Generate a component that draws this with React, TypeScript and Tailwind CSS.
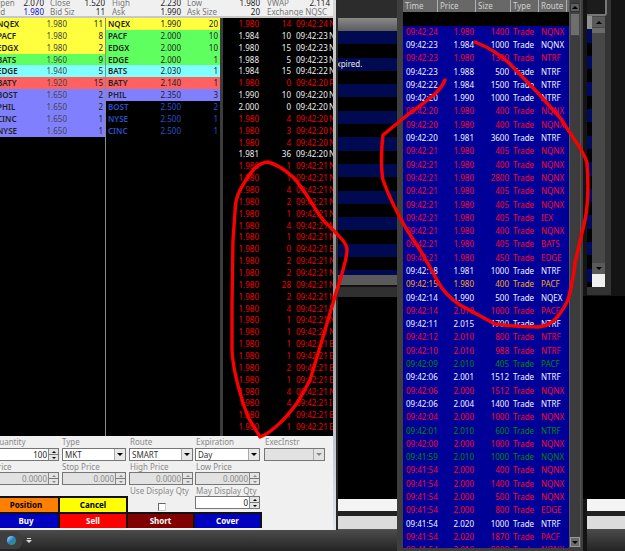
import React from "react";

const bidRows: { n: string; p: string; s: string; c: string }[] = [
  { n: "NQEX", p: "1.980", s: "11", c: "bg-[#ffff40]" },
  { n: "PACF", p: "1.980", s: "8", c: "bg-[#ffff40]" },
  { n: "EDGX", p: "1.980", s: "2", c: "bg-[#ffff40]" },
  { n: "BATS", p: "1.960", s: "9", c: "bg-[#60ff60]" },
  { n: "EDGE", p: "1.940", s: "5", c: "bg-[#80ffff]" },
  { n: "BATY", p: "1.920", s: "15", c: "bg-[#ff6060]" },
  { n: "BOST", p: "1.650", s: "2", c: "bg-[#8080ff]" },
  { n: "PHIL", p: "1.650", s: "2", c: "bg-[#8080ff]" },
  { n: "CINC", p: "1.650", s: "1", c: "bg-[#8080ff]" },
  { n: "NYSE", p: "1.650", s: "1", c: "bg-[#8080ff]" },
];
const askRows: { n: string; p: string; s: string; c: string }[] = [
  { n: "NQEX", p: "1.990", s: "20", c: "bg-[#ffff40] text-[#222]" },
  { n: "PACF", p: "2.000", s: "10", c: "bg-[#60ff60] text-[#222]" },
  { n: "EDGX", p: "2.000", s: "10", c: "bg-[#60ff60] text-[#222]" },
  { n: "EDGE", p: "2.000", s: "1", c: "bg-[#60ff60] text-[#222]" },
  { n: "BATS", p: "2.030", s: "1", c: "bg-[#80ffff] text-[#222]" },
  { n: "BATY", p: "2.140", s: "1", c: "bg-[#ff6060] text-[#222]" },
  { n: "PHIL", p: "2.350", s: "3", c: "bg-[#8080ff] text-[#222]" },
  { n: "BOST", p: "2.500", s: "2", c: "bg-black text-[#2850c8]" },
  { n: "NYSE", p: "2.500", s: "1", c: "bg-black text-[#2850c8]" },
  { n: "CINC", p: "2.500", s: "1", c: "bg-black text-[#2850c8]" },
];

const w = "text-[#f0f0f0]";
const r = "text-[#f00000]";
const trades: [string, string, string, string, string][] = [
  ["1.980", "14", "09:42:24", "N", r],
  ["1.984", "10", "09:42:23", "N", w],
  ["1.980", "15", "09:42:23", "N", w],
  ["1.988", "5", "09:42:23", "N", w],
  ["1.984", "15", "09:42:22", "N", w],
  ["1.980", "0", "09:42:20", "P", r],
  ["1.990", "10", "09:42:20", "N", w],
  ["2.000", "0", "09:42:20", "N", w],
  ["1.980", "4", "09:42:20", "N", r],
  ["1.980", "3", "09:42:20", "N", r],
  ["1.980", "4", "09:42:20", "N", r],
  ["1.981", "36", "09:42:20", "N", w],
  ...(
    [
      ["1", "N"], ["1", "N"], ["4", "N"], ["2", "N"], ["1", "N"], ["4", "N"], ["1", "N"], ["0", "E"],
      ["2", "N"], ["2", "N"], ["28", "N"], ["2", "N"], ["4", "I"], ["1", "N"], ["1", "N"], ["1", "B"],
      ["1", "E"], ["2", "B"], ["1", "E"], ["4", "N"], ["4", "I"], ["1", "B"], ["1", "E"],
    ] as [string, string][]
  ).map(([s, x]): [string, string, string, string, string] => ["1.980", s, "09:42:21", x, r]),
];

const R = "text-[#ff0028]";
const W = "text-[#f4f4ff]";
const G = "text-[#008a00]";
const O = "text-[#f8a820]";
const sales: [string, string, string, string, string][] = [
  ["09:42:24", "1.980", "1400", "NQNX", R],
  ["09:42:23", "1.984", "1000", "NQNX", W],
  ["09:42:23", "1.980", "1300", "NTRF", R],
  ["09:42:23", "1.988", "500", "NTRF", W],
  ["09:42:22", "1.984", "1500", "NTRF", W],
  ["09:42:20", "1.990", "1000", "NTRF", W],
  ["09:42:20", "1.980", "400", "NQNX", R],
  ["09:42:20", "1.980", "400", "NQNX", R],
  ["09:42:20", "1.981", "3600", "NTRF", W],
  ["09:42:21", "1.980", "405", "NQNX", R],
  ["09:42:21", "1.980", "400", "NQNX", R],
  ["09:42:21", "1.980", "2800", "NQNX", R],
  ["09:42:21", "1.980", "405", "NQNX", R],
  ["09:42:21", "1.980", "405", "NQNX", R],
  ["09:42:21", "1.980", "405", "IEX", R],
  ["09:42:21", "1.980", "400", "NQNX", R],
  ["09:42:21", "1.980", "405", "BATS", R],
  ["09:42:21", "1.980", "450", "EDGE", R],
  ["09:42:18", "1.981", "1000", "NTRF", W],
  ["09:42:15", "1.980", "400", "PACF", O],
  ["09:42:14", "1.990", "500", "NQEX", W],
  ["09:42:14", "2.010", "1000", "PACF", R],
  ["09:42:11", "2.015", "1700", "NTRF", W],
  ["09:42:12", "2.010", "800", "NTRF", R],
  ["09:42:10", "2.010", "988", "NTRF", R],
  ["09:42:09", "2.010", "405", "PACF", G],
  ["09:42:06", "2.001", "1512", "NTRF", W],
  ["09:42:06", "2.000", "1512", "NQNX", R],
  ["09:42:06", "2.004", "1400", "NTRF", W],
  ["09:42:04", "2.000", "1000", "NQNX", R],
  ["09:42:01", "2.010", "600", "NTRF", G],
  ["09:42:00", "2.000", "1000", "NQNX", R],
  ["09:41:59", "2.010", "1000", "NQNX", G],
  ["09:41:54", "2.000", "400", "NQNX", R],
  ["09:41:54", "2.000", "1400", "NQNX", R],
  ["09:41:54", "2.000", "500", "NQNX", R],
  ["09:41:54", "2.000", "800", "EDGE", R],
  ["09:41:54", "2.020", "1000", "NTRF", W],
  ["09:41:54", "2.020", "1870", "PACF", R],
  ["09:41:54", "2.010", "9000", "NQNX", R],
];

const Arrow = ({ cls = "border-t-black" }: { cls?: string }) => (
  <span className={`block w-0 h-0 border-x-[3px] border-x-transparent border-t-[3px] ${cls}`} />
);

const Spin = ({ off }: { off?: boolean }) => (
  <span className="flex flex-col w-[10px] shrink-0 h-full bg-[#e4e4e4] border-l border-[#888]">
    <span className="flex-1 flex items-center justify-center border-b border-[#777]">
      <span className={`block w-0 h-0 border-x-[2px] border-x-transparent border-b-[2px] ${off ? "border-b-[#888]" : "border-b-black"}`} />
    </span>
    <span className="flex-1 flex items-center justify-center">
      <span className={`block w-0 h-0 border-x-[2px] border-x-transparent border-t-[2px] ${off ? "border-t-[#888]" : "border-t-black"}`} />
    </span>
  </span>
);

const Field = ({ v, off, cls = "" }: { v: string; off?: boolean; cls?: string }) => (
  <div className={`h-[13px] flex items-center justify-end border border-[#767676] ${off ? "bg-[#e2e2e2] text-[#8a8a8a]" : "bg-white text-[#222]"} ${cls}`}>
    <span className="pr-[1px]">{v}</span>
    <Spin off={off} />
  </div>
);

const Sel = ({ v, off }: { v: string; off?: boolean }) => (
  <div className={`h-[13px] flex items-center justify-between border border-[#767676] ${off ? "bg-[#e2e2e2]" : "bg-white"} text-[#333]`}>
    <span className="pl-[2px]">{v}</span>
    <span className={`w-[11px] h-full flex items-center justify-center ${off ? "bg-[#e2e2e2]" : "bg-[#e8e8e8]"} border-l border-[#aaa]`}>
      <Arrow cls={off ? "border-t-[#888]" : "border-t-black"} />
    </span>
  </div>
);

const Lbl = ({ t, cls = "" }: { t: string; cls?: string }) => (
  <div className={`flex items-center text-[#8a8a8a] whitespace-nowrap ${cls}`}>{t}</div>
);

const Btn = ({ t, cls }: { t: string; cls: string }) => (
  <div className={`h-[16px] flex items-center justify-center font-bold border-t-2 border-r-2 border-[#111] ${cls}`}>{t}</div>
);

const Cell = ({ a, b, cls, bc = "text-[#222]", ml = "" }: { a: string; b: string; cls: string; bc?: string; ml?: string }) => (
  <span className={`flex justify-between whitespace-nowrap ${cls}`}>
    <span className={ml}>{a}</span>
    <span className={bc}>{b}</span>
  </span>
);

export default function App() {
  return (
    <div className="relative w-[625px] h-[551px] overflow-hidden flex bg-black text-[8px] leading-none font-['Noto_Sans',Arial,sans-serif]">
      {/* left & mid */}
      <div className="w-[397px] h-full flex flex-col shrink-0">
        <div className="h-[530px] flex">
          <div className="w-[338px] h-full flex">
            <div className="w-[333px] h-full flex flex-col overflow-hidden">
              {/* quote header */}
              <div className="h-[18px] bg-[#f0f0f0] border-b-2 border-[#c8c8c8] text-[#777] overflow-hidden">
                <div className="flex h-[9px] -mt-[2px] items-center">
                  <Cell a="Open" b="2.070" cls="w-[44px]" ml="-ml-[6px]" />
                  <Cell a="Close" b="1.520" cls="w-[55px] ml-[6px]" />
                  <Cell a="High" b="2.230" cls="w-[69px] ml-[7px]" />
                  <Cell a="Low" b="1.980" cls="w-[73px] ml-[6px]" />
                  <Cell a="VWAP" b="2.114" cls="w-[63px] ml-[7px]" />
                </div>
                <div className="flex h-[9px] items-center">
                  <Cell a="Bid" b="1.980" cls="w-[44px]" bc="text-[#1010d0]" ml="-ml-[7px]" />
                  <Cell a="Bid Siz" b="11" cls="w-[55px] ml-[6px]" />
                  <Cell a="Ask" b="1.990" cls="w-[69px] ml-[7px]" />
                  <Cell a="Ask Size" b="20" cls="w-[73px] ml-[6px]" />
                  <Cell a="Exchange" b="NQSC" cls="w-[60px] ml-[7px]" bc="text-[#777]" />
                </div>
              </div>
              {/* level 2 + trades */}
              <div className="h-[418px] shrink-0 flex bg-black overflow-hidden">
                <div className="w-[105px] shrink-0">
                  {bidRows.map((b) => (
                    <div key={b.n} className={`h-[11.87px] flex items-center ${b.c}`}>
                      <span className="w-[37px] -ml-[3px] shrink-0 font-semibold text-[#222]">{b.n}</span>
                      <span className="w-[33px] text-right shrink-0 text-[#444]">{b.p}</span>
                      <span className="w-[36px] text-right shrink-0 text-[#222]">{b.s}</span>
                    </div>
                  ))}
                </div>
                <div className="w-[1px] bg-[#8a8a8a] shrink-0" />
                <div className="w-[114px] shrink-0">
                  {askRows.map((b) => (
                    <div key={b.n} className={`h-[11.87px] flex items-center ${b.c}`}>
                      <span className="w-[32px] pl-[2px] shrink-0 font-semibold">{b.n}</span>
                      <span className="w-[43px] text-right shrink-0">{b.p}</span>
                      <span className="w-[37px] text-right shrink-0">{b.s}</span>
                    </div>
                  ))}
                </div>
                <div className="w-[3px] bg-[#3c3c3c] shrink-0" />
                <div className="w-[110px] shrink-0 overflow-hidden">
                  {trades.map((t, i) => (
                    <div key={i} className={`h-[11.87px] flex items-center whitespace-nowrap ${t[4]}`}>
                      <span className="w-[36px] text-right shrink-0">{t[0]}</span>
                      <span className="w-[32px] text-right shrink-0">{t[1]}</span>
                      <span className="ml-[5px] w-[33px] shrink-0">{t[2]}</span>
                      <span>{t[3]}</span>
                    </div>
                  ))}
                </div>
              </div>
              {/* order form */}
              <div className="flex-1 bg-[#f0f0f0] text-[#333] overflow-hidden">
                <div className="grid grid-cols-[60px_68px_67px_67px_71px]">
                  <div className="pr-[1px]">
                    <Lbl t="Quantity" cls="h-[12px] -ml-[7px]" />
                    <Field v="100" cls="border-l-0" />
                    <Lbl t="Price" cls="h-[11px] -ml-[7px]" />
                    <Field v="0.0000" off cls="border-l-0" />
                  </div>
                  <div className="px-[2px]">
                    <Lbl t="Type" cls="h-[12px]" />
                    <Sel v="MKT" />
                    <Lbl t="Stop Price" cls="h-[11px]" />
                    <Field v="0.000" off />
                  </div>
                  <div className="pl-[1px] pr-[2px]">
                    <Lbl t="Route" cls="h-[12px] pl-[1px]" />
                    <Sel v="SMART" />
                    <Lbl t="High Price" cls="h-[11px] pl-[1px]" />
                    <Field v="0.0000" off />
                  </div>
                  <div className="pr-[2px]">
                    <Lbl t="Expiration" cls="h-[12px] pl-[1px]" />
                    <Sel v="Day" />
                    <Lbl t="Low Price" cls="h-[11px] pl-[1px]" />
                    <Field v="0.0000" off />
                  </div>
                  <div className="pl-[2px] pr-[8px]">
                    <Lbl t="ExecInstr" cls="h-[12px] pl-[1px]" />
                    <Sel v="" off />
                  </div>
                </div>
                <div className="grid grid-cols-[60px_68px_67px_67px_71px] mt-[1px]">
                  <div className="-ml-[6px] pt-[10px]">
                    <Btn t="Position" cls="bg-[#ff8000] text-black" />
                    <Btn t="Buy" cls="bg-[#0000c0] text-white" />
                  </div>
                  <div className="pt-[10px]">
                    <Btn t="Cancel" cls="bg-[#ffff00] text-black" />
                    <Btn t="Sell" cls="bg-[#ff0000] text-white" />
                  </div>
                  <div>
                    <Lbl t="Use Display Qty" cls="h-[10px] pl-[2px]" />
                    <div className="h-[16px] flex items-end justify-center pb-[1px]">
                      <span className="w-[8px] h-[8px] bg-white border border-t-[#666] border-l-[#666] border-r-[#ccc] border-b-[#ccc]" />
                    </div>
                    <Btn t="Short" cls="bg-[#800000] text-white" />
                  </div>
                  <div>
                    <Lbl t="May Display Qty" cls="h-[10px] pl-[1px]" />
                    <div className="h-[16px] pr-[2px]">
                      <Field v="0" />
                    </div>
                    <Btn t="Cover" cls="bg-[#0000c0] text-white" />
                  </div>
                </div>
              </div>
            </div>
            {/* glass edge */}
            <div className="w-[5px] h-full flex">
              <div className="w-[3px] bg-gradient-to-b from-[#d8d8d8] via-[#888] to-[#dfe8f0]" />
              <div className="w-[2px] bg-[#2a2a2a]" />
            </div>
          </div>
          {/* mid */}
          <div className="w-[59px] h-full flex flex-col text-[#e8e8e8]">
            <div className="h-[18px] bg-[#2c2c2c] shrink-0" />
            <div className="h-[13px] bg-gradient-to-b from-[#8a8a8a] to-[#5c5c5c] shrink-0" />
            <div className="h-[244px] shrink-0 overflow-hidden">
              {Array.from({ length: 19 }).map((_, i) => (
                <div key={i} className={`h-[13.3px] flex items-center ${i % 2 === 0 ? "bg-[#000a50]" : "bg-black"}`}>
                  {i === 2 && <span className="-ml-[6px]">Expired.</span>}
                </div>
              ))}
            </div>
            <div className="h-[10px] bg-[#5a5a5a] shrink-0" />
            <div className="h-[2px] bg-[#111] shrink-0" />
            <div className="h-[10px] bg-[#303030] shrink-0" />
            <div className="flex-1 bg-black" />
            <div className="h-[12px] bg-[#f4f4f4] shrink-0" />
            <div className="h-[5px] bg-[#222] shrink-0" />
            <div className="h-[13px] bg-[#dcdcdc] shrink-0" />
            <div className="h-[1px] bg-[#555] shrink-0" />
          </div>
        </div>
        {/* taskbar */}
        <div className="flex-1 bg-gradient-to-b from-[#4c4c4c] to-[#242424] flex items-center">
          <span className="w-[22px] h-[17px] rounded-r-md bg-[#3e3e3e] flex items-center justify-center">
            <span className="w-[9px] h-[9px] rounded-full bg-gradient-to-br from-[#bfe4ff] via-[#2a7fc8] to-[#3aa04a]" />
          </span>
          <span className="ml-[4px] flex flex-col items-center gap-[1px]">
            <span className="w-[4px] h-[1px] bg-[#ddd]" />
            <Arrow cls="border-t-[#ddd]" />
          </span>
        </div>
      </div>

      {/* blue time & sales */}
      <div className="w-[186px] h-full shrink-0 bg-[#3e3e3e] flex pl-[6px] pr-[2px] pb-[3px]">
        <div className="w-[166px] h-full flex flex-col overflow-hidden">
          <div className="h-[12px] shrink-0 flex bg-[#686868] text-[#d0d0d0]">
            {[["Time", "w-[35px]"], ["Price", "w-[38px]"], ["Size", "w-[35px]"], ["Type", "w-[28px]"], ["Route", "w-[28px]"]].map(([t, c]) => (
              <span key={t} className={`${c} h-full flex items-center pl-[2px] border-r border-[#b0b0b0]`}>{t}</span>
            ))}
          </div>
          <div className="h-[14px] shrink-0 bg-black" />
          <div className="flex-1 bg-[#000098] overflow-hidden">
            <div className="-mt-[1px]">
              {sales.map((s, i) => (
                <div key={i} className={`h-[13.3px] flex items-center whitespace-nowrap ${s[4]}`}>
                  <span className="w-[36px] pl-[3px] shrink-0">{s[0]}</span>
                  <span className="w-[35px] text-right shrink-0">{s[1]}</span>
                  <span className="w-[35px] text-right shrink-0">{s[2]}</span>
                  <span className="w-[28px] pl-[4px] shrink-0">Trade</span>
                  <span className="pl-[4px]">{s[3]}</span>
                </div>
              ))}
            </div>
          </div>
        </div>
        <div className="w-[12px] h-full flex flex-col bg-[#3c3c3c] border-x border-[#555]">
          <div className="h-[3px] shrink-0" />
          <div className="h-[9px] shrink-0 bg-[#5e5e5e] flex items-center justify-center border border-[#333]">
            <span className="block w-0 h-0 border-x-[3px] border-x-transparent border-b-[3px] border-b-black" />
          </div>
          <div className="h-[23px] shrink-0 mt-[1px] bg-[#6e6e6e] border border-[#444]" />
          <div className="flex-1" />
          <div className="h-[10px] shrink-0 mb-[1px] bg-[#6a6a6a] flex items-center justify-center border border-[#999]">
            <Arrow />
          </div>
        </div>
      </div>

      {/* far right */}
      <div className="flex-1 h-full flex flex-col pl-[4px] bg-[#141414]">
        <div className="h-[296px] shrink-0 flex">
          <div className="w-[24px] h-[295px] flex flex-col bg-[#333]">
            <div className="h-[16px] shrink-0 bg-[#1c1c1c] border-r-2 border-b-2 border-[#777] rounded-br-[3px] mr-[4px]" />
            <div className="h-[271px] flex">
              <div className="w-[5px] flex flex-col overflow-hidden">
                {Array.from({ length: 21 }).map((_, i) => (
                  <div key={i} className={`h-[13.3px] shrink-0 ${i === 0 ? "bg-[#909090]" : i % 2 ? "bg-[#000a60]" : "bg-black"}`} />
                ))}
              </div>
              <div className="w-[13px] flex flex-col bg-[#484848]">
                <div className="h-[10px] mt-[1px] shrink-0 bg-[#5a5a5a] flex items-center justify-center">
                  <span className="block w-0 h-0 border-x-[3px] border-x-transparent border-b-[3px] border-b-black" />
                </div>
                <div className="h-[5px] shrink-0 mt-[1px] bg-[#6a6a6a]" />
                <div className="flex-1" />
                <div className="h-[11px] shrink-0 bg-[#5a5a5a] flex items-center justify-center">
                  <Arrow />
                </div>
                <div className="h-[13px] shrink-0 bg-[#f0f0f0]" />
              </div>
            </div>
          </div>
        </div>
        <div className="flex-1 bg-black -ml-[4px]" />
        <div className="h-[12px] shrink-0 bg-[#f4f4f4]" />
        <div className="h-[5px] shrink-0 bg-[#222]" />
        <div className="h-[13px] shrink-0 bg-[#dcdcdc]" />
        <div className="h-[22px] shrink-0 bg-gradient-to-b from-[#4c4c4c] to-[#242424]" />
      </div>

      {/* hand-drawn annotations */}
      <svg className="absolute inset-0 pointer-events-none" width="625" height="551" viewBox="0 0 625 551" fill="none">
        <path
          d="M268 162 C258 162 250 172 240 190 C236 198 235 205 235 212 L233 240 L232 303 L232 350 C233 370 240 395 248 417 L260 437 C268 434 282 424 297 403 C304 392 307 386 310 380 L323 337 L333 303 C338 285 347 262 347 250 C347 243 340 237 323 220 C312 205 305 190 293 177 C285 170 276 164 268 162 Z"
          stroke="#fb0000"
          strokeWidth="3.4"
          strokeLinejoin="round"
          strokeLinecap="round"
        />
        <path
          d="M445 80 C440 92 428 100 410 113 L383 135 C381 150 381 170 383 180 C390 200 400 218 407 230 L422 253 L437 280 C442 290 448 297 460 305 L495 324 C510 326 525 327 538 327 C550 326 558 320 568 300 C572 285 574 275 575 263 L585 220 C588 205 589 190 587 163 C584 150 572 138 562 120 L538 93 L508 62 C498 53 485 46 475 42"
          stroke="#fb0000"
          strokeWidth="3.4"
          strokeLinejoin="round"
          strokeLinecap="round"
        />
      </svg>
    </div>
  );
}
